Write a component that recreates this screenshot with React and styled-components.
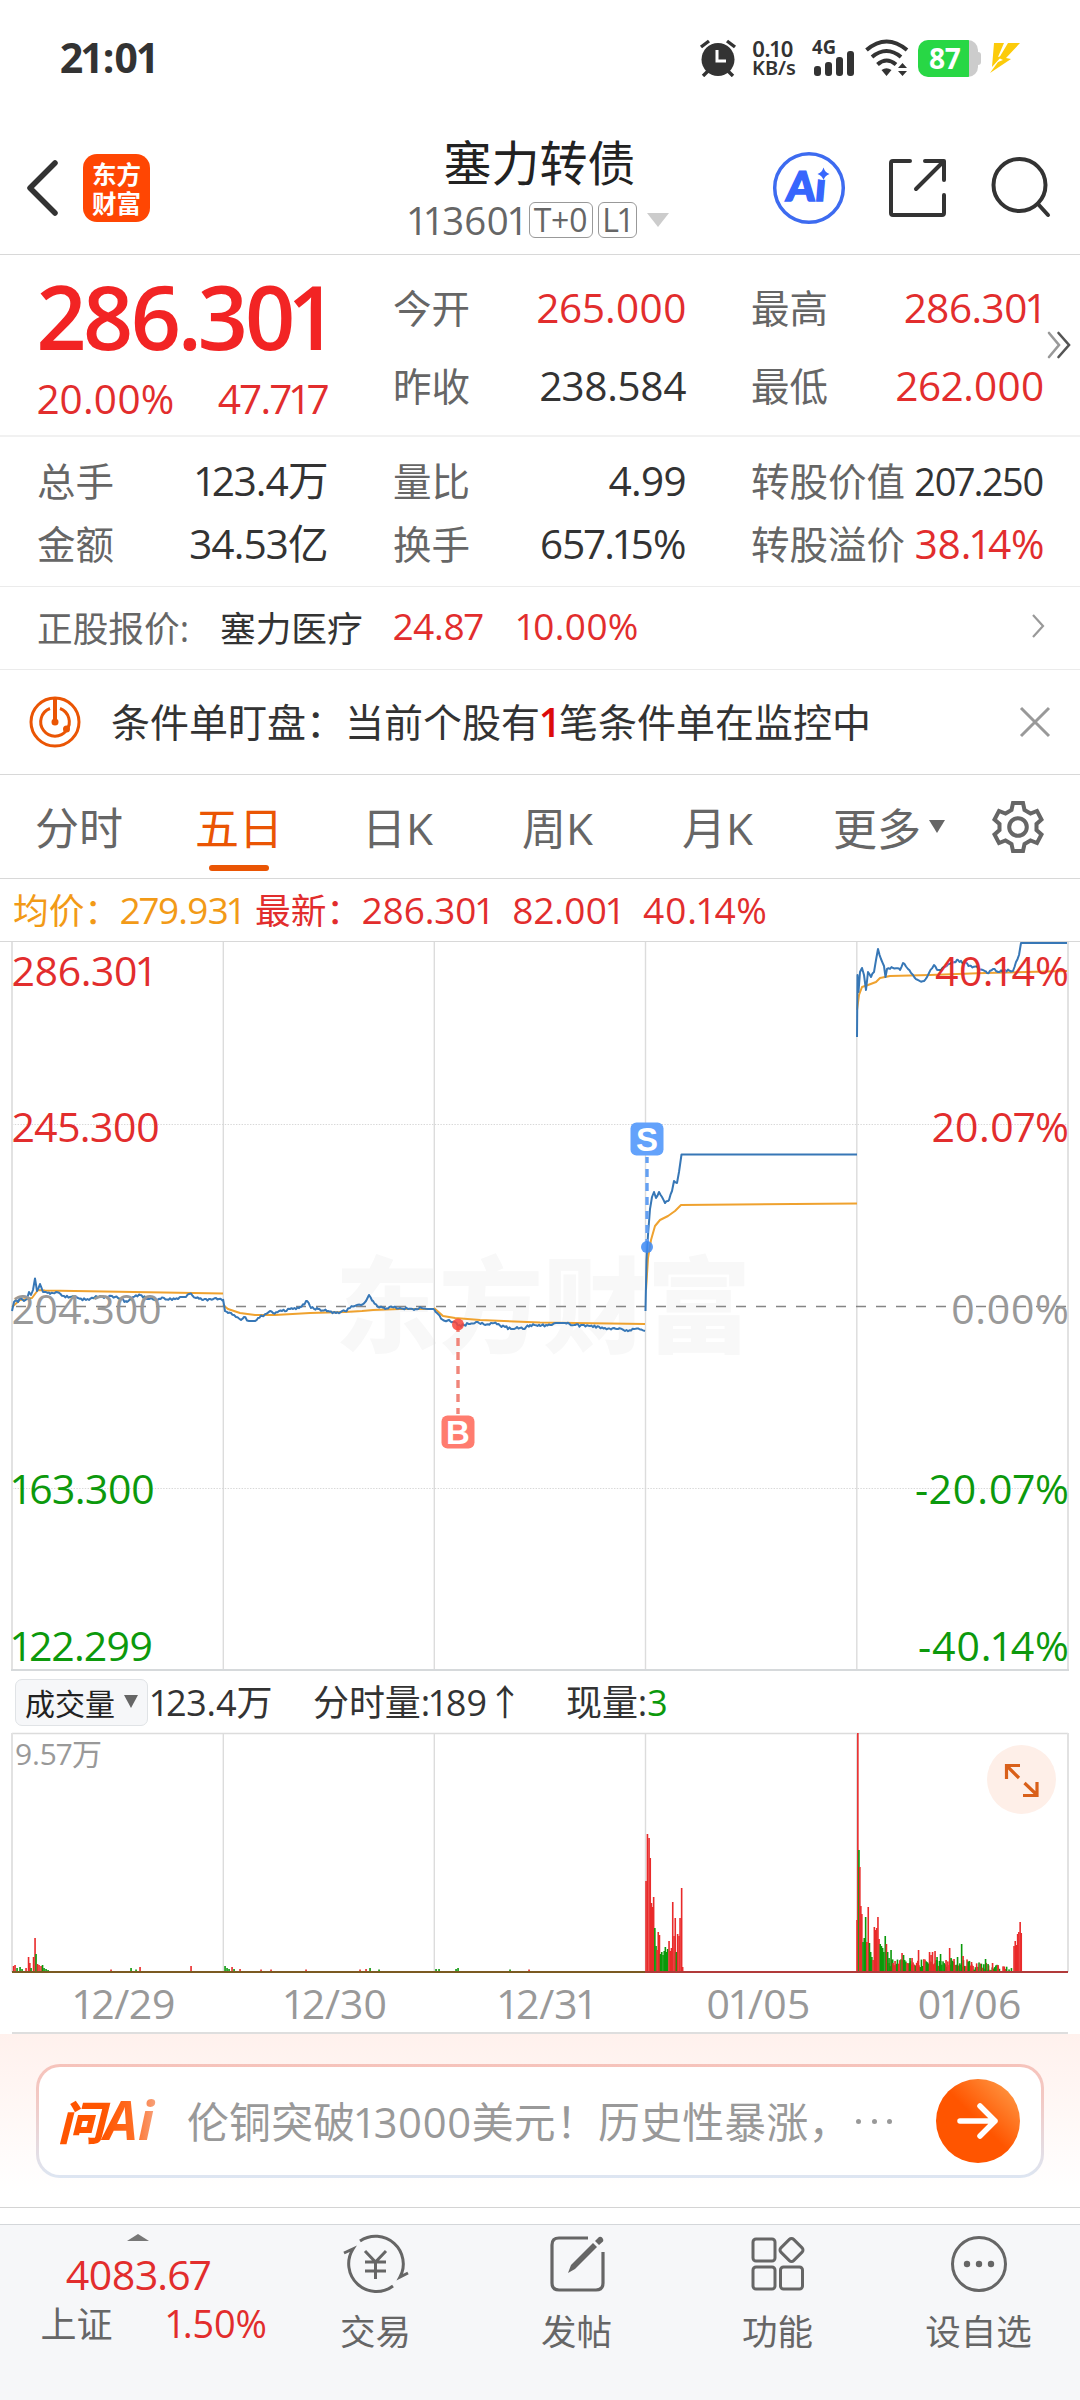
import React from "react";
import styled, { createGlobalStyle } from "styled-components";

const RED = "#e22d2d";
const GREEN = "#0c990c";
const DARK = "#333";
const GRAY = "#666";
const LIGHT = "#999";
const ORANGE = "#ea5504";
const FONT = `"Open Sans", "Noto Sans CJK SC", sans-serif`;

const price = [
  [
    [12, 1311], [14, 1302], [16, 1300], [18, 1302], [20, 1298], [24, 1301], [27, 1299], [29, 1292],
    [31, 1295], [33, 1290], [35, 1278.5], [37, 1291], [40, 1284], [43, 1292], [46, 1292], [50, 1294],
    [56, 1292], [64, 1296], [70, 1297], [78, 1298], [86, 1300], [96, 1296], [104, 1298], [112, 1296],
    [120, 1299], [127, 1302], [133, 1297], [140, 1295], [148, 1299], [156, 1300], [164, 1298],
    [172, 1300], [180, 1297], [186, 1297], [191, 1293.5], [196, 1298], [203, 1300], [210, 1299],
    [216, 1298], [223, 1301],
  ],
  [
    [223, 1299], [225, 1311], [231, 1313], [236, 1317], [241, 1320], [244, 1317], [249, 1321],
    [255, 1321], [262, 1316], [270, 1311], [273, 1313], [282, 1311], [290, 1309], [300, 1307],
    [307, 1301], [311, 1308], [318, 1309], [328, 1311], [336, 1313], [345, 1311], [350, 1308],
    [355, 1306], [361, 1305], [366, 1301], [369, 1295], [373, 1301], [378, 1307], [385, 1309],
    [392, 1307], [400, 1308], [408, 1309], [414, 1310], [420, 1307], [428, 1309], [434, 1309],
  ],
  [
    [434, 1309], [438, 1314], [443, 1320], [450, 1321], [455, 1322], [458, 1326], [464, 1325],
    [476, 1322], [485, 1325], [494, 1323], [505, 1327], [511, 1329], [517, 1327], [523, 1329],
    [530, 1325], [540, 1326], [550, 1325], [556, 1323], [565, 1323], [575, 1325], [590, 1326],
    [605, 1328], [618, 1329], [625, 1331], [634, 1329], [645, 1331],
  ],
  [
    [645.5, 1311], [646.5, 1260], [648, 1235], [650, 1209], [652, 1197], [654, 1192], [656, 1198],
    [659, 1192], [662, 1197], [665, 1203], [669, 1200], [672, 1191], [674, 1181], [677, 1183],
    [679, 1172], [680, 1165], [681.5, 1154.5], [857, 1154.5],
  ],
  [
    [857, 1037], [857.5, 975], [858.5, 992], [860, 972], [862, 968], [864, 975], [866, 990],
    [868, 972], [871, 977], [874, 972], [876, 960], [878, 949], [881, 959], [884, 966], [885.5, 977],
    [887, 969], [893, 968], [900, 970], [903, 963], [908, 969], [913, 975], [918, 980], [924, 981],
    [929, 973], [934, 965], [938, 970], [944, 967], [951, 963], [958, 960], [964, 963], [971, 966],
    [978, 968], [983, 970], [987, 973], [993, 969], [998, 972], [1005, 970], [1013, 971],
    [1016, 962], [1019, 955], [1021, 943], [1067, 943],
  ],
];

const average = [
  "12,1307 20,1300 32,1298 38,1290 45,1290.5 223,1293.5",
  "223,1305 228,1309 240,1313 255,1315 275,1315 310,1313 345,1312 362,1311 373,1310 400,1309 434,1309",
  "434,1308 443,1316 455,1318 480,1320 540,1322.5 645,1324",
  "646,1290 648,1258 651,1240 655,1226 660,1220 668,1216 675,1211 681,1205 857,1203.5",
  "857,1010 859,995 862,987 868,985 876,982 880,978 890,976 930,975 985,973 1067,971",
];

// pseudo random in -0.5..0.5, same on every render
const noise = (n) => {
  const v = Math.sin(n * 12.9898) * 43758.5453;
  return v - Math.floor(v) - 0.5;
};

const toPoints = (list) => {
  const out = [];
  list.forEach(([x, y], i) => {
    out.push(`${x},${y}`);
    const next = list[i + 1];
    if (!next || next[1] === y || next[0] - x < 3 || next[0] - x > 40) return;
    for (let px = x + 1.5; px < next[0] - 0.5; px += 1.5) {
      const t = (px - x) / (next[0] - x);
      out.push(`${px},${(y + (next[1] - y) * t + noise(px) * 2.6).toFixed(1)}`);
    }
  });
  return out.join(" ");
};

// [x, height, up]
const volume = [
  [13.5, 6, 1], [15, 7, 1], [17, 4, 0], [20, 5, 0], [22, 3, 0], [26, 4, 1], [28.5, 15, 1], [29.8, 9, 1],
  [31, 4, 0], [33.5, 15, 1], [35, 34, 1], [36, 18, 0], [37.5, 8, 1], [39, 7, 1], [41, 6, 1], [42.5, 7, 0],
  [44, 4, 0], [46, 3, 0], [48, 2, 0], [111, 2.5, 1], [131, 4, 0], [136, 2.5, 0], [140, 5, 1], [191, 6, 1],
  [225, 6, 0], [227, 4, 0], [229, 3, 0], [232, 5, 1], [234, 3, 0], [240, 3, 1], [261, 2.5, 1], [271, 2.5, 1],
  [306, 2.5, 1], [360, 2.5, 1], [366, 3, 1], [370, 4, 0], [379, 2.5, 0], [436, 3, 0], [439, 3, 0],
  [456, 3, 0], [458, 4, 0], [510, 2.5, 0], [529, 2.5, 1],
  [646, 91, 1], [647.4, 138, 1], [649, 134, 1], [650.2, 114, 1], [651.4, 69, 1], [652.5, 65, 1],
  [653.6, 75, 1], [654.8, 44, 0], [656, 26, 0], [657, 22, 1], [658.2, 40, 1], [659.4, 37, 1],
  [660.5, 18, 0], [661.7, 20, 0], [663, 17, 0], [664.2, 21, 0], [665.3, 25, 0], [666.5, 20, 0],
  [667.6, 23, 0], [669, 31, 1], [670.2, 21, 1], [671.4, 24, 1], [672.7, 70, 1], [674, 36, 1],
  [675.2, 54, 1], [676.4, 20, 0], [677.6, 38, 1], [679, 36, 1], [680, 54, 1], [681.6, 84, 1], [682.6, 5, 1],
  [857, 52, 1], [857.8, 239, 1], [858.9, 122, 0], [859.8, 105, 1], [860.8, 66, 1], [861.8, 58, 1],
  [863, 30, 0], [864.2, 34, 0], [865.6, 55, 0], [866.8, 30, 1], [868.2, 65, 1], [869.4, 29, 0],
  [870.6, 20, 0], [871.8, 15, 0], [873, 12, 1], [874.3, 45, 1], [875.5, 42, 1], [876.7, 44, 1],
  [877.9, 55, 1], [879, 33, 1], [880.2, 28, 0], [881.4, 26, 0], [882.6, 24, 0], [883.8, 20, 0],
  [885.2, 36, 0], [886.4, 28, 1], [887.6, 20, 0], [889, 14, 0], [891, 22, 0], [893, 9, 1], [895, 11, 1],
  [902, 19, 1], [903.5, 17, 0], [910, 14, 0], [912, 14, 1], [918.5, 22, 1], [929.5, 20, 1], [931, 17, 1],
  [932.5, 20, 1], [935, 21, 1], [937, 15, 0], [940.5, 18, 0], [946, 12, 1], [949.6, 24, 1], [951, 14, 0],
  [954, 13, 1], [957.5, 15, 0], [961.6, 28, 0], [963, 16, 1], [971.5, 10, 1], [985.5, 13, 0], [988, 8, 0],
  [992.5, 9, 1], [998, 7, 1], [1014, 26, 1], [1015.2, 31, 1], [1016.4, 27, 1], [1017.6, 38, 1],
  [1018.8, 40, 1], [1020.1, 50, 1], [1021.2, 39, 1],
];

const filler = [];
for (let x = 889; x < 1013; x += 1.2) {
  const top = x < 970 ? 9 : 6.5 - (x - 970) * 0.08;
  filler.push([x, top + noise(x * 3) * 8, noise(x * 7) > 0.05 ? 1 : 0]);
}

const bars = filler.concat(volume);

const PriceChart = () => (
  <ChartSvg viewBox="0 942 1080 731" width="1080" height="731">
    <g fontFamily={`"Noto Sans CJK SC"`} fontSize="104" fontWeight="900" fill="#f8f8f8">
      <text x="335" y="1345" textLength="416">东方财富</text>
    </g>
    <g stroke="#dcdcdc" strokeWidth="1.4">
      {[223.3, 434.3, 645.5, 856.8].map((x) => (
        <line key={x} x1={x} x2={x} y1="942" y2="1670" />
      ))}
    </g>
    <g stroke="#d8d8d8" strokeWidth="1" strokeDasharray="1.4 1.4">
      <line x1="12" x2="1067" y1="1124.5" y2="1124.5" />
      <line x1="12" x2="1067" y1="1488.5" y2="1488.5" />
    </g>
    <g stroke="#e2e2e2" strokeWidth="2">
      <line x1="12" x2="12" y1="942" y2="1670" />
      <line x1="1068" x2="1068" y1="942" y2="1670" />
      <line x1="11" x2="1069" y1="1670" y2="1670" stroke="#d6d9db" />
    </g>
    <line x1="12" x2="1067" y1="1306.5" y2="1306.5" stroke="#858585" strokeWidth="1.5" strokeDasharray="10 10" strokeDashoffset="-4" />
    <g fill="none" stroke="#efa22f" strokeWidth="2" strokeLinejoin="round">
      {average.map((line) => (
        <polyline key={line} points={line} />
      ))}
    </g>
    <g fill="none" stroke="#3777b6" strokeWidth="2" strokeLinejoin="round">
      {price.map((line) => (
        <polyline key={line[0][0]} points={toPoints(line)} />
      ))}
    </g>
    <line x1="458" x2="458" y1="1326" y2="1414" stroke="#f0857a" strokeWidth="3.4" strokeDasharray="8 6" strokeDashoffset="2" />
    <circle cx="458" cy="1324.5" r="6" fill="#f8453b" fillOpacity=".85" />
    <rect x="441.5" y="1415.5" width="33" height="33" rx="6" fill="#ff7c6f" />
    <line x1="647" x2="647" y1="1157" y2="1242" stroke="#64a0f2" strokeWidth="3.4" strokeDasharray="8 6" strokeDashoffset="2" />
    <circle cx="647" cy="1247" r="6" fill="#3d8af5" fillOpacity=".85" />
    <rect x="630.5" y="1122.5" width="33" height="33" rx="6" fill="#63a2fb" />
    <g fontFamily="Liberation Sans" fontSize="33" fontWeight="700" fill="#fff" textAnchor="middle">
      <text x="458" y="1444">B</text>
      <text x="647" y="1151">S</text>
    </g>
    <g fontFamily={FONT} fontSize="41">
      <g fill={RED}>
        <text x="12" y="985.5" textLength="143">286.301</text>
        <text x="12" y="1141.5" textLength="148">245.300</text>
        <text x="935" y="985.5" textLength="134">40.14%</text>
        <text x="932" y="1141.5" textLength="137">20.07%</text>
      </g>
      <g fill={LIGHT}>
        <text x="12" y="1323.5" textLength="150">204.300</text>
        <text x="951" y="1323.5" textLength="118">0.00%</text>
      </g>
      <g fill={GREEN}>
        <text x="12" y="1504" textLength="143">163.300</text>
        <text x="12" y="1660.5" textLength="141">122.299</text>
        <text x="915" y="1504" textLength="154">-20.07%</text>
        <text x="918" y="1660.5" textLength="151">-40.14%</text>
      </g>
    </g>
  </ChartSvg>
);

const VolumeChart = () => (
  <ChartSvg viewBox="0 1732 1080 242" width="1080" height="242">
    <g stroke="#dcdcdc" strokeWidth="1.4">
      <line x1="12" x2="1068" y1="1733.5" y2="1733.5" />
      {[223.3, 434.3, 645.5, 856.8].map((x) => (
        <line key={x} x1={x} x2={x} y1="1733" y2="1972" />
      ))}
    </g>
    <g stroke="#e2e2e2" strokeWidth="2">
      <line x1="12" x2="12" y1="1733" y2="1972" />
      <line x1="1068" x2="1068" y1="1733" y2="1972" />
    </g>
    {bars.map(([x, h, up], i) => (
      <rect key={i} x={x - 0.75} y={1972 - h} width="1.6" height={h} fill={up ? "#e92a2a" : "#0a990a"} />
    ))}
    <line x1="12" x2="645" y1="1972" y2="1972" stroke="#7b5a22" strokeWidth="2.2" />
    <line x1="645" x2="1068" y1="1972" y2="1972" stroke="#b13a3a" strokeWidth="2" />
    <text x="15" y="1765" fontFamily={FONT} fontSize="30" fill={LIGHT} textLength="87">9.57万</text>
  </ChartSvg>
);

const stats = [
  ["今开", "265.000", RED, 0],
  ["最高", "286.301", RED, -0.6],
  ["昨收", "238.584", DARK, -0.5],
  ["最低", "262.000", RED, -0.1],
];

const details = [
  ["总手", "123.4万", DARK, -0.9],
  ["量比", "4.99", DARK, -0.7],
  ["转股价值", "207.250", DARK, -1.2, 38],
  ["金额", "34.53亿", DARK, -0.8],
  ["换手", "657.15%", DARK, -0.8],
  ["转股溢价", "38.14%", RED, -0.4],
];

const StatItem = ({ data }) => (
  <Stat>
    <Label>{data[0]}</Label>
    <Num $color={data[2]} $ls={data[3]} $size={data[4]}>
      {data[1]}
    </Num>
  </Stat>
);

function StatusBar() {
  return (
    <StatusWrapper>
      <Clock>21:01</Clock>
      <StatusIcons>
        <svg width="38" height="38" viewBox="0 0 38 38" fill={DARK}>
          <circle cx="19" cy="20.5" r="16.5" />
          <path d="M2 8 L10 2 M36 8 L28 2 M4 37 L9 32 M34 37 L29 32" stroke={DARK} strokeWidth="3.4" />
          <path d="M18 11 V22 H27" fill="none" stroke="#fff" strokeWidth="3" />
        </svg>
        <NetSpeed>
          <b>0.10</b>
          <span>KB/s</span>
        </NetSpeed>
        <SignalSvg width="44" height="38" viewBox="0 0 44 38" fill={DARK}>
          <text x="0" y="15" fontFamily="Noto Sans" fontSize="19" fontWeight="700" textLength="24" lengthAdjust="spacingAndGlyphs">4G</text>
          <rect x="2" y="27" width="7" height="10" rx="3" />
          <rect x="13" y="23" width="7" height="14" rx="3" />
          <rect x="24" y="18" width="7" height="19" rx="3" />
          <rect x="35" y="12" width="7" height="25" rx="3" />
        </SignalSvg>
        <svg width="44" height="38" viewBox="0 0 44 38" fill="none" stroke={DARK} strokeWidth="4">
          <path d="M1.5 11 Q21.5 -6 42 11" />
          <path d="M7 18 Q21.5 6 36 18" />
          <path d="M12.5 25.5 Q21.5 17.5 31 25.5" />
          <path d="M16.5 31 Q21.5 27.5 26.5 31 L21.5 37 Z M33 29 L37.5 24 L42 29 Z M33 32 L37.5 37 L42 32 Z" fill={DARK} stroke="none" />
        </svg>
        <Battery>
          <span>87</span>
        </Battery>
        <svg width="30" height="32" viewBox="0 0 30 32" fill="#fccb0a">
          <path d="M4 1 H14 L8 15 L12 14 L2 25 Z" />
          <path d="M18 1 H30 L16 16 L21 17 L0 31 L8 20 L13 18 L9 16 Z" />
        </svg>
      </StatusIcons>
    </StatusWrapper>
  );
}

function Header() {
  return (
    <HeaderWrapper>
      <HeaderSide>
        <svg width="34" height="58" viewBox="0 0 34 58" fill="none" stroke={DARK} strokeWidth="5.5" strokeLinecap="round" strokeLinejoin="round">
          <path d="M31 4 L6 29 L31 54" />
        </svg>
        <AppLogo>
          <span>东方</span>
          <span>财富</span>
        </AppLogo>
      </HeaderSide>
      <TitleBox>
        <Title>塞力转债</Title>
        <SubTitle>
          <Num $color={GRAY} $size={38.5} $ls={0.2}>113601</Num>
          <Tag $width={64}>T+0</Tag>
          <Tag $width={39}>L1</Tag>
          <Triangle $w={11} $h={14} $color="#ccc" />
        </SubTitle>
      </TitleBox>
      <HeaderIcons>
        <svg width="74" height="74" viewBox="0 0 74 74">
          <circle cx="37" cy="37" r="34.3" fill="#fff" stroke="#3d6bf0" strokeWidth="3.5" />
          <text x="14" y="50" fontFamily="Lato" fontSize="41" fontWeight="900" fill="#3766fd" stroke="#3766fd" strokeWidth="1.5" transform="skewX(-5) translate(4 0)">Ai</text>
          <circle cx="51" cy="21" r="8" fill="#fff" />
          <path d="M51.5 16.5 Q53 21.5 57.5 23 Q53 24.5 51.5 29 Q50 24.5 45.5 23 Q50 21.5 51.5 16.5 Z" fill="#3766fd" />
        </svg>
        <svg width="60" height="60" viewBox="0 0 60 60" fill="none" stroke={DARK} strokeWidth="4" strokeLinecap="round" strokeLinejoin="round">
          <path d="M22 3 H5 Q3 3 3 5 V55 Q3 57 5 57 H54 Q56 57 56 55 V37" />
          <path d="M37 3 H56 V22 M55 4 L28 31" />
        </svg>
        <svg width="62" height="62" viewBox="0 0 62 62" fill="none" stroke={DARK} strokeWidth="4" strokeLinecap="round">
          <circle cx="29.5" cy="28" r="26" />
          <path d="M48 47 L58 58" />
        </svg>
      </HeaderIcons>
    </HeaderWrapper>
  );
}

function QuotePanel() {
  return (
    <>
      <QuoteWrapper>
        <MainPrice>
          <BigPrice>286.301</BigPrice>
          <Stat>
            <Num $color={RED}>20.00%</Num>
            <Num $color={RED} $ls={-0.5}>47.717</Num>
          </Stat>
        </MainPrice>
        <QuoteGrid>
          {stats.map((item) => (
            <StatItem key={item[0]} data={item} />
          ))}
        </QuoteGrid>
        <MoreArrow width="26" height="30" viewBox="0 0 26 30" fill="none" strokeWidth="2.6" strokeLinecap="round">
          <path d="M3 3 L13 15 L3 27" stroke="#999" />
          <path d="M12.5 3 L23 15 L12.5 27" stroke="#555" />
        </MoreArrow>
      </QuoteWrapper>
      <DetailGrid>
        {details.map((item) => (
          <StatItem key={item[0]} data={item} />
        ))}
      </DetailGrid>
      <StockRow>
        <StockLabel>正股报价:</StockLabel>
        <StockName>塞力医疗</StockName>
        <Num $color={RED} $size={37} $ls={-0.4}>24.87</Num>
        <StockRate>
          <Num $color={RED} $size={37} $ls={0.1}>10.00%</Num>
        </StockRate>
        <svg width="14" height="26" viewBox="0 0 14 26" fill="none" stroke="#999" strokeWidth="2.2">
          <path d="M2 2 L12 13 L2 24" />
        </svg>
      </StockRow>
    </>
  );
}

function Alert() {
  return (
    <AlertWrapper>
      <svg width="52" height="52" viewBox="0 0 52 52" fill="none" stroke={ORANGE} strokeWidth="3">
        <circle cx="26" cy="26" r="24" />
        <path d="M21 12.5 A14.3 14.3 0 1 0 31 12.5" />
        <path d="M26 2 V26" strokeWidth="4" />
        <circle cx="26" cy="26" r="3.5" fill={ORANGE} stroke="none" />
        <circle cx="37.5" cy="33" r="3.5" fill={ORANGE} stroke="none" />
      </svg>
      <AlertText>
        条件单盯盘：当前个股有<b>1</b>笔条件单在监控中
      </AlertText>
      <svg width="32" height="32" viewBox="0 0 32 32" stroke="#999" strokeWidth="3">
        <path d="M2 2 L30 30 M30 2 L2 30" />
      </svg>
    </AlertWrapper>
  );
}

function Tabs() {
  return (
    <TabsWrapper>
      <Tab $width={158}>分时</Tab>
      <Tab $width={169} $active>五日</Tab>
      <Tab $width={160}>日K</Tab>
      <Tab $width={160}>周K</Tab>
      <Tab $width={151}>月K</Tab>
      <MoreTab>
        更多
        <Triangle $w={8} $h={13} $color={GRAY} />
      </MoreTab>
      <svg width="54" height="54" viewBox="0 0 54 54" fill="none" stroke={GRAY} strokeWidth="4">
        <circle cx="27" cy="27" r="8.8" />
        <path d="M22 3 H32 L33.5 10 L39.5 13.5 L46 11 L50.5 19.5 L45.5 24 V30 L50.5 34.5 L46 43 L39.5 40.5 L33.5 44 L32 51 H22 L20.5 44 L14.5 40.5 L8 43 L3.5 34.5 L8.5 30 V24 L3.5 19.5 L8 11 L14.5 13.5 L20.5 10 Z" />
      </svg>
    </TabsWrapper>
  );
}

function ChartPanel() {
  return (
    <>
      <AverageRow>
        <AverageText $color="#f29a17" $width={242}>
          均价：<Num $color="#f29a17" $size={37} $ls={-0.7}>279.931</Num>
        </AverageText>
        <AverageText $color={RED} $width={257}>
          最新：<Num $color={RED} $size={37} $ls={-0.2}>286.301</Num>
        </AverageText>
        <AverageText $width={131}>
          <Num $color={RED} $size={37}>82.001</Num>
        </AverageText>
        <Num $color={RED} $size={37} $ls={0.7}>40.14%</Num>
      </AverageRow>
      <PriceChart />
      <VolumeHeader>
        <VolumeSelect>
          成交量
          <Triangle $w={7.5} $h={13} $color={GRAY} />
        </VolumeSelect>
        <VolumeText $width={162}>123.4万</VolumeText>
        <VolumeText $width={253}>
          分时量:189<Arrow>↑</Arrow>
        </VolumeText>
        <VolumeText>
          现量:<i>3</i>
        </VolumeText>
      </VolumeHeader>
      <VolumeBox>
        <VolumeChart />
        <ExpandButton>
          <svg width="36" height="36" viewBox="0 0 36 36" fill="none" stroke="#d9601a" strokeWidth="3.2">
            <path d="M2.5 17 V3.5 H16 M4 5 L15 16" />
            <path d="M33 20 V33.5 H19 M32 32 L20.5 21" />
          </svg>
        </ExpandButton>
      </VolumeBox>
      <DateRow>
        {["12/29", "12/30", "12/31", "01/05", "01/06"].map((date) => (
          <span key={date}>{date}</span>
        ))}
      </DateRow>
    </>
  );
}

function AskBar() {
  return (
    <AskWrapper>
      <AskBox>
        <AskLogo>
          问<b>Ai</b>
        </AskLogo>
        <AskText>伦铜突破13000美元！历史性暴涨，</AskText>
        <Dots>
          <i />
          <i />
          <i />
        </Dots>
        <AskButton>
          <svg width="42" height="38" viewBox="0 0 42 38" fill="none" stroke="#fff" strokeWidth="5.5" strokeLinecap="round" strokeLinejoin="round">
            <path d="M3 19 H38 M23 4 L38 19 L23 34" />
          </svg>
        </AskButton>
      </AskBox>
    </AskWrapper>
  );
}

function BottomNav() {
  return (
    <NavWrapper>
      <IndexBox>
        <UpMark />
        <Num $color={RED} $size={41} $ls={-0.8}>4083.67</Num>
        <IndexRow>
          <span>上证</span>
          <Num $color={RED} $size={38} $ls={-0.3}>1.50%</Num>
        </IndexRow>
      </IndexBox>
      <NavItem>
        <svg width="66" height="60" viewBox="0 0 66 60" fill="none" stroke={GRAY} strokeWidth="3">
          <path d="M17 7 A27.7 27.7 0 0 1 57 43 L65 39" />
          <path d="M50 52 A27.7 27.7 0 0 1 10 15 L1 19" />
          <path d="M22 17 L32.5 28 L43 17 M22 28 H43 M22 37 H43 M32.5 28 V45" />
        </svg>
        <span>交易</span>
      </NavItem>
      <NavItem>
        <svg width="56" height="60" viewBox="0 0 56 60" fill="none" stroke={GRAY} strokeWidth="3.2">
          <path d="M39 4 H10 Q3 4 3 11 V49 Q3 56 10 56 H47 Q54 56 54 49 V18" />
          <path d="M19 39 L22 31 L44 9 L48 13 L26 35 Z M46 7 L50 3 Q52 2 53.5 4 Q55 6 54 7.5 L50 11 Z" fill={GRAY} stroke="none" />
        </svg>
        <span>发帖</span>
      </NavItem>
      <NavItem>
        <svg width="54" height="60" viewBox="0 0 54 60" fill="none" stroke={GRAY} strokeWidth="3">
          <rect x="2" y="5" width="22" height="22" rx="3" />
          <rect x="2" y="33" width="22" height="22" rx="3" />
          <rect x="29.5" y="33" width="22" height="22" rx="3" />
          <rect x="31.5" y="7" width="18" height="18" rx="3" transform="rotate(45 40.5 16)" />
        </svg>
        <span>功能</span>
      </NavItem>
      <NavItem>
        <svg width="60" height="60" viewBox="0 0 60 60" fill={GRAY}>
          <circle cx="30" cy="30" r="26.5" fill="none" stroke={GRAY} strokeWidth="3" />
          <circle cx="18" cy="30" r="3.2" />
          <circle cx="30" cy="30" r="3.2" />
          <circle cx="42" cy="30" r="3.2" />
        </svg>
        <span>设自选</span>
      </NavItem>
    </NavWrapper>
  );
}

function App() {
  return (
    <Page>
      <GlobalStyle />
      <StatusBar />
      <Header />
      <QuotePanel />
      <Alert />
      <Tabs />
      <ChartPanel />
      <AskBar />
      <BottomNav />
    </Page>
  );
}

const GlobalStyle = createGlobalStyle`
  * {
    box-sizing: border-box;
  }
  body {
    margin: 0;
    background: #fff;
    font-family: ${FONT};
    font-feature-settings: "pnum";
  }
  svg {
    display: block;
    flex-shrink: 0;
  }
`;

const Page = styled.div`
  width: 1080px;
  height: 2400px;
  display: flex;
  flex-direction: column;
  overflow: hidden;
  white-space: nowrap;
  color: ${DARK};
`;

const Num = styled.span`
  font-size: ${(p) => p.$size || 40.5}px;
  letter-spacing: ${(p) => p.$ls || 0}px;
  margin-right: ${(p) => -1.5 - (p.$ls || 0)}px;
  line-height: 48px;
  color: ${(p) => p.$color};
`;

const Triangle = styled.i`
  border-left: ${(p) => p.$w}px solid transparent;
  border-right: ${(p) => p.$w}px solid transparent;
  border-top: ${(p) => p.$h}px solid ${(p) => p.$color};
`;

const ChartSvg = styled.svg`
  display: block;
`;

const StatusWrapper = styled.div`
  height: 116px;
  padding: 0 60px 0 60px;
  display: flex;
  align-items: center;
  justify-content: space-between;
`;

const Clock = styled.div`
  font-size: 41px;
  font-weight: 700;
  letter-spacing: -0.7px;
  padding-bottom: 3px;
`;

const StatusIcons = styled.div`
  display: flex;
  align-items: center;
`;

const SignalSvg = styled.svg`
  margin-right: 9px;
  overflow: visible;
`;

const NetSpeed = styled.div`
  width: 44px;
  margin: 0 16px 0 15px;
  display: flex;
  flex-direction: column;
  font-family: "Noto Sans", sans-serif;
  font-size: 20px;
  line-height: 20px;
  font-weight: 600;
  b {
    font-size: 22px;
    font-weight: 600;
    letter-spacing: -0.5px;
  }
`;

const Battery = styled.div`
  width: 60px;
  height: 37px;
  margin: 0 12px 0 9px;
  border-radius: 10px;
  display: flex;
  align-items: center;
  background: linear-gradient(90deg, #28d745 51px, #ccc 51px);
  position: relative;
  span {
    width: 53px;
    text-align: center;
    color: #fff;
    font-family: "Noto Sans", sans-serif;
    font-size: 28px;
    font-weight: 700;
  }
  &::after {
    content: "";
    position: absolute;
    right: -3px;
    top: 12px;
    width: 4px;
    height: 13px;
    border-radius: 0 3px 3px 0;
    background: #ccc;
  }
`;

const HeaderWrapper = styled.div`
  height: 139px;
  padding: 0 28px 0 24px;
  display: flex;
  justify-content: space-between;
  border-bottom: 1px solid #d8d8d8;
`;

const HeaderSide = styled.div`
  width: 283px;
  height: 143px;
  display: flex;
  align-items: center;
  gap: 25px;
`;

const AppLogo = styled.div`
  width: 67px;
  height: 68px;
  border-radius: 14px;
  background: #ff4603;
  color: #fff;
  display: flex;
  flex-direction: column;
  align-items: center;
  justify-content: center;
  font-family: "Noto Sans CJK SC", sans-serif;
  font-size: 24.5px;
  line-height: 29px;
  font-weight: 700;
`;

const TitleBox = styled.div`
  display: flex;
  flex-direction: column;
  align-items: center;
  padding-top: 16px;
`;

const Title = styled.div`
  font-size: 48px;
  line-height: 62px;
  color: #222;
`;

const SubTitle = styled.div`
  height: 52px;
  width: 262px;
  display: flex;
  align-items: center;
  gap: 5px;
  ${Num} {
    width: 115px;
    margin-right: 0;
  }
  ${Triangle} {
    margin-left: 5px;
  }
`;

const Tag = styled.div`
  width: ${(p) => p.$width}px;
  height: 36px;
  border: 1.5px solid #999;
  border-radius: 6px;
  text-align: center;
  font-size: 32px;
  line-height: 33px;
  letter-spacing: -0.4px;
  color: ${GRAY};
`;

const HeaderIcons = styled.div`
  height: 143px;
  display: flex;
  align-items: center;
  gap: 42px;
`;

const QuoteWrapper = styled.div`
  height: 182px;
  padding: 0 37px;
  display: flex;
  gap: 66px;
  border-bottom: 2px solid #f1f1f1;
  position: relative;
`;

const Stat = styled.div`
  display: flex;
  align-items: center;
  justify-content: space-between;
`;

const Label = styled.span`
  font-size: 38.5px;
  line-height: 48px;
  color: ${GRAY};
`;

const MainPrice = styled.div`
  width: 290px;
  padding-top: 18px;
`;

const BigPrice = styled.div`
  height: 102px;
  font-size: 88px;
  line-height: 87px;
  font-weight: 600;
  letter-spacing: -4px;
  color: #f22424;
`;

const QuoteGrid = styled.div`
  flex: 1;
  display: grid;
  grid-template-columns: 292px 292px;
  grid-template-rows: 78px 78px;
  column-gap: 66px;
  padding-top: 14px;
`;

const MoreArrow = styled.svg`
  position: absolute;
  right: 8px;
  top: 75px;
`;

const DetailGrid = styled.div`
  height: 150px;
  padding: 12px 37px 0;
  display: grid;
  grid-template-columns: 290px 292px 292px;
  grid-template-rows: 63px 63px;
  column-gap: 66px;
  border-bottom: 1px solid #ebebeb;
`;

const StockRow = styled.div`
  height: 83px;
  padding: 0 35px 4px 37px;
  display: flex;
  align-items: center;
  border-bottom: 1px solid #ebebeb;
  font-size: 35.7px;
`;

const StockLabel = styled.span`
  width: 183px;
  color: ${GRAY};
`;

const StockName = styled.span`
  width: 173px;
`;

const StockRate = styled.div`
  flex: 1;
  padding-left: 35px;
`;

const AlertWrapper = styled.div`
  height: 105px;
  padding: 0 29px;
  display: flex;
  align-items: center;
  border-bottom: 1px solid #d8d8d8;
`;

const AlertText = styled.div`
  flex: 1;
  padding: 0 0 5px 30px;
  font-size: 39px;
  b {
    display: inline-block;
    width: 19px;
    font-weight: 600;
    color: #dc0a0a;
    text-indent: 1px;
  }
`;

const TabsWrapper = styled.div`
  height: 104px;
  padding: 0 35px;
  display: flex;
  align-items: center;
  border-bottom: 1px solid #d8d8d8;
`;

const Tab = styled.div`
  width: ${(p) => p.$width}px;
  height: 104px;
  padding-left: ${(p) => (p.$active ? 2 : 0)}px;
  font-size: 44px;
  line-height: 106px;
  color: ${(p) => (p.$active ? ORANGE : GRAY)};
  position: relative;
  &::after {
    content: "";
    display: ${(p) => (p.$active ? "block" : "none")};
    position: absolute;
    left: 16px;
    bottom: 8px;
    width: 60px;
    height: 6px;
    border-radius: 3px;
    background: ${ORANGE};
  }
`;

const MoreTab = styled.div`
  flex: 1;
  display: flex;
  align-items: center;
  gap: 8px;
  font-size: 44px;
  color: ${GRAY};
`;

const AverageRow = styled.div`
  height: 63px;
  padding-left: 13px;
  display: flex;
  align-items: center;
  border-bottom: 1px solid #d8d8d8;
`;

const AverageText = styled.div`
  width: ${(p) => p.$width}px;
  color: ${(p) => p.$color};
  font-size: 35.7px;
  line-height: 48px;
`;

const VolumeHeader = styled.div`
  height: 59px;
  padding-left: 15px;
  display: flex;
  align-items: center;
`;

const VolumeSelect = styled.div`
  width: 133px;
  height: 47px;
  margin-right: 3px;
  padding-bottom: 2px;
  display: flex;
  align-items: center;
  justify-content: center;
  gap: 9px;
  border: 1px solid #e0e3e6;
  border-radius: 7px;
  background: #f6f7f9;
  font-size: 30px;
  color: #222;
`;

const VolumeText = styled.div`
  width: ${(p) => p.$width}px;
  padding-bottom: 4px;
  font-size: 36px;
  letter-spacing: -0.1px;
  i {
    font-style: normal;
    color: ${GREEN};
  }
`;

const Arrow = styled.span`
  font-family: "Noto Sans CJK SC", sans-serif;
`;

const VolumeBox = styled.div`
  position: relative;
`;

const ExpandButton = styled.div`
  position: absolute;
  right: 24px;
  top: 13px;
  width: 69px;
  height: 69px;
  border-radius: 50%;
  background: #feefe8;
  display: flex;
  align-items: center;
  justify-content: center;
`;

const DateRow = styled.div`
  height: 60px;
  margin: 0 12px;
  display: flex;
  align-items: center;
  border-bottom: 2px solid #dedede;
  font-size: 41px;
  color: ${LIGHT};
  span {
    flex: 1;
    padding-left: 14px;
    text-align: center;
  }
`;

const AskWrapper = styled.div`
  height: 174px;
  padding: 30px 36px 0;
  border-bottom: 1px solid #d4d4d4;
  background: linear-gradient(#fff1ed, #fff 160px);
`;

const AskBox = styled.div`
  height: 114px;
  padding: 0 21px 0 19px;
  display: flex;
  align-items: center;
  border: 3px solid transparent;
  border-radius: 24px;
  background: linear-gradient(#fff, #fff) padding-box, linear-gradient(#f6c3bb, #f3c9c4 30%, #dde6f2) border-box;
`;

const AskLogo = styled.div`
  width: 129px;
  padding-bottom: 2px;
  font-size: 46px;
  line-height: 70px;
  font-weight: 900;
  font-style: italic;
  background: linear-gradient(90deg, #ff5500 45px, #ff6d24 75px, #f7a27c 98px);
  background-clip: text;
  color: transparent;
  b {
    font-size: 54px;
    font-weight: 700;
  }
`;

const AskText = styled.div`
  font-size: 41.8px;
  letter-spacing: 0.3px;
  width: 669px;
  padding-bottom: 2px;
  color: ${LIGHT};
`;

const Dots = styled.div`
  width: 36px;
  display: flex;
  justify-content: space-between;
  i {
    width: 5px;
    height: 5px;
    border-radius: 50%;
    background: ${LIGHT};
  }
`;

const AskButton = styled.div`
  width: 84px;
  height: 84px;
  margin-left: auto;
  border-radius: 50%;
  display: flex;
  align-items: center;
  justify-content: center;
  background: linear-gradient(45deg, #ff5500 50%, #ff9440 90%);
`;

const NavWrapper = styled.div`
  flex: 1;
  margin-top: 16px;
  display: flex;
  border-top: 1px solid #d4d7da;
  background: #f6f7f9;
`;

const IndexBox = styled.div`
  width: 275px;
  display: flex;
  flex-direction: column;
  align-items: center;
  padding-top: 9px;
`;

const UpMark = styled.i`
  border-left: 11px solid transparent;
  border-right: 11px solid transparent;
  border-bottom: 7px solid #777;
  margin-bottom: 9px;
`;

const IndexRow = styled.div`
  width: 225px;
  display: flex;
  align-items: center;
  justify-content: space-between;
  font-size: 36px;
  color: ${GRAY};
  margin: -2px 0 0 31px;
`;

const NavItem = styled.div`
  width: 201px;
  padding-top: 9px;
  display: flex;
  flex-direction: column;
  align-items: center;
  font-size: 35.5px;
  line-height: 52px;
  color: ${GRAY};
  span {
    margin-top: 11px;
  }
`;

export default App;
